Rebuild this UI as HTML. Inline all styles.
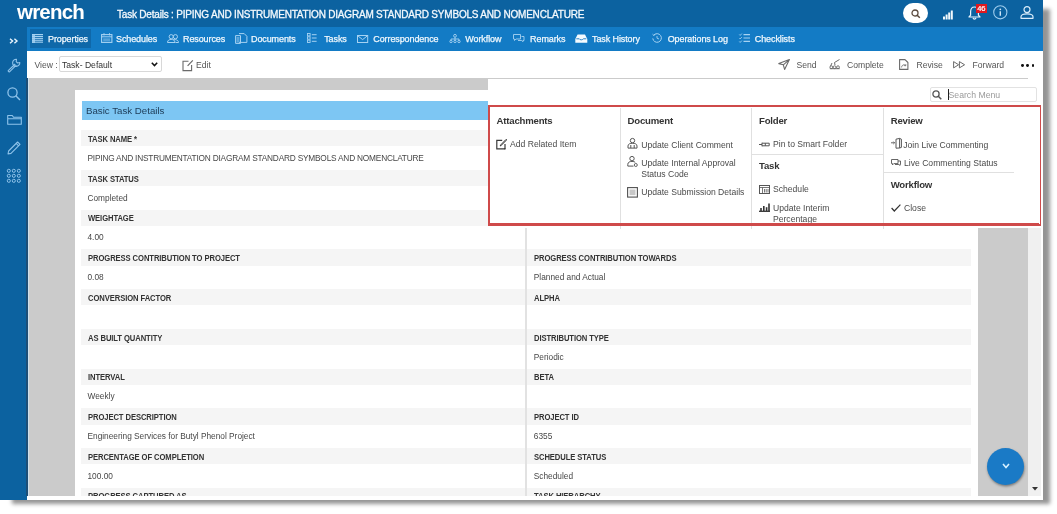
<!DOCTYPE html>
<html><head><meta charset="utf-8">
<style>
*{box-sizing:border-box;margin:0;padding:0}
html,body{width:1057px;height:514px;overflow:hidden;background:#fff;font-family:"Liberation Sans",sans-serif;}
.abs{position:absolute}
.t{position:absolute;white-space:nowrap;line-height:1;}
#frame{position:absolute;left:0;top:0;width:1043px;height:500px;background:#fff;will-change:transform;box-shadow:9px 6px 4px -2.5px rgba(0,0,0,0.42);}
#main{position:absolute;left:0;top:0;width:1043px;height:500px;overflow:hidden}
#clip{position:absolute;left:0;top:0;width:1041px;height:496px;overflow:hidden}
svg{position:absolute;overflow:visible}
.nv{position:absolute;top:35px;white-space:nowrap;line-height:1;font-size:9px;color:#eef7fd;-webkit-text-stroke:0.25px #eef7fd;letter-spacing:-0.1px}
.tb{position:absolute;top:60.5px;white-space:nowrap;line-height:1;font-size:8.6px;color:#333}
.lab{position:absolute;white-space:nowrap;line-height:1;font-size:8.9px;font-weight:bold;color:#333;letter-spacing:-0.1px;transform:scaleX(0.86);transform-origin:0 0}
.val{position:absolute;white-space:nowrap;line-height:1;font-size:8.3px;color:#474747}
.mh{position:absolute;white-space:nowrap;line-height:1;font-size:9.6px;font-weight:bold;color:#333;letter-spacing:-0.2px}
.mi{position:absolute;white-space:nowrap;line-height:1;font-size:8.6px;color:#4a4a4a}
</style></head><body>
<div id="frame">
<div id="main">

<div class="abs" style="left:0;top:0;width:27px;height:500px;background:#0c62a0"></div>
<div class="abs" style="left:0;top:0;width:1043px;height:27px;background:#0c62a0"></div>
<div class="abs" style="left:27px;top:27px;width:1016px;height:24px;background:#137bc5"></div>
<div class="abs" style="left:30px;top:29px;width:61px;height:18.5px;background:#0f68a9"></div>
<div class="abs" style="left:27px;top:51px;width:1016px;height:27.5px;background:#fff"></div>
<div id="clip">
<div class="abs" style="left:28px;top:78.3px;width:1000px;height:418px;background:#cbcbcb"></div>
<div class="abs" style="left:26px;top:78.3px;width:1.5px;height:418px;background:#1d4f78"></div>
<div class="abs" style="left:27.5px;top:78.3px;width:1.5px;height:418px;background:#cfe0ec"></div>
<div class="abs" style="left:1028px;top:79px;width:13px;height:417px;background:#f0f0f0"></div>
<div class="abs" style="left:75px;top:90px;width:903px;height:406px;background:#fff"></div>
<div class="abs" style="left:82px;top:101px;width:889px;height:19px;background:#7dc6f3"></div>
<div class="t" style="left:86px;top:106px;font-size:9.7px;color:#1d3b57">Basic Task Details</div>
<div class="abs" style="left:80.5px;top:130.30px;width:444.5px;height:16.2px;background:#f5f5f5"></div>
<div class="abs" style="left:527px;top:130.30px;width:444px;height:16.2px;background:#f5f5f5"></div>
<div class="lab" style="left:87.5px;top:134.90px">TASK NAME *</div>
<div class="val" style="left:87.5px;top:154.00px;letter-spacing:-0.2px">PIPING AND INSTRUMENTATION DIAGRAM STANDARD SYMBOLS AND NOMENCLATURE</div>
<div class="abs" style="left:80.5px;top:170.02px;width:444.5px;height:16.2px;background:#f5f5f5"></div>
<div class="abs" style="left:527px;top:170.02px;width:444px;height:16.2px;background:#f5f5f5"></div>
<div class="lab" style="left:87.5px;top:174.62px">TASK STATUS</div>
<div class="val" style="left:87.5px;top:193.72px;">Completed</div>
<div class="abs" style="left:80.5px;top:209.74px;width:444.5px;height:16.2px;background:#f5f5f5"></div>
<div class="abs" style="left:527px;top:209.74px;width:444px;height:16.2px;background:#f5f5f5"></div>
<div class="lab" style="left:87.5px;top:214.34px">WEIGHTAGE</div>
<div class="val" style="left:87.5px;top:233.44px;">4.00</div>
<div class="abs" style="left:80.5px;top:249.46px;width:444.5px;height:16.2px;background:#f5f5f5"></div>
<div class="abs" style="left:527px;top:249.46px;width:444px;height:16.2px;background:#f5f5f5"></div>
<div class="lab" style="left:87.5px;top:254.06px">PROGRESS CONTRIBUTION TO PROJECT</div>
<div class="val" style="left:87.5px;top:273.16px;">0.08</div>
<div class="lab" style="left:533.8px;top:254.06px">PROGRESS CONTRIBUTION TOWARDS</div>
<div class="val" style="left:533.8px;top:273.16px;">Planned and Actual</div>
<div class="abs" style="left:80.5px;top:289.18px;width:444.5px;height:16.2px;background:#f5f5f5"></div>
<div class="abs" style="left:527px;top:289.18px;width:444px;height:16.2px;background:#f5f5f5"></div>
<div class="lab" style="left:87.5px;top:293.78px">CONVERSION FACTOR</div>
<div class="lab" style="left:533.8px;top:293.78px">ALPHA</div>
<div class="abs" style="left:80.5px;top:328.90px;width:444.5px;height:16.2px;background:#f5f5f5"></div>
<div class="abs" style="left:527px;top:328.90px;width:444px;height:16.2px;background:#f5f5f5"></div>
<div class="lab" style="left:87.5px;top:333.50px">AS BUILT QUANTITY</div>
<div class="lab" style="left:533.8px;top:333.50px">DISTRIBUTION TYPE</div>
<div class="val" style="left:533.8px;top:352.60px;">Periodic</div>
<div class="abs" style="left:80.5px;top:368.62px;width:444.5px;height:16.2px;background:#f5f5f5"></div>
<div class="abs" style="left:527px;top:368.62px;width:444px;height:16.2px;background:#f5f5f5"></div>
<div class="lab" style="left:87.5px;top:373.22px">INTERVAL</div>
<div class="val" style="left:87.5px;top:392.32px;">Weekly</div>
<div class="lab" style="left:533.8px;top:373.22px">BETA</div>
<div class="abs" style="left:80.5px;top:408.34px;width:444.5px;height:16.2px;background:#f5f5f5"></div>
<div class="abs" style="left:527px;top:408.34px;width:444px;height:16.2px;background:#f5f5f5"></div>
<div class="lab" style="left:87.5px;top:412.94px">PROJECT DESCRIPTION</div>
<div class="val" style="left:87.5px;top:432.04px;">Engineering Services for Butyl Phenol Project</div>
<div class="lab" style="left:533.8px;top:412.94px">PROJECT ID</div>
<div class="val" style="left:533.8px;top:432.04px;">6355</div>
<div class="abs" style="left:80.5px;top:448.06px;width:444.5px;height:16.2px;background:#f5f5f5"></div>
<div class="abs" style="left:527px;top:448.06px;width:444px;height:16.2px;background:#f5f5f5"></div>
<div class="lab" style="left:87.5px;top:452.66px">PERCENTAGE OF COMPLETION</div>
<div class="val" style="left:87.5px;top:471.76px;">100.00</div>
<div class="lab" style="left:533.8px;top:452.66px">SCHEDULE STATUS</div>
<div class="val" style="left:533.8px;top:471.76px;">Scheduled</div>
<div class="abs" style="left:80.5px;top:487.78px;width:444.5px;height:16.2px;background:#f5f5f5"></div>
<div class="abs" style="left:527px;top:487.78px;width:444px;height:16.2px;background:#f5f5f5"></div>
<div class="lab" style="left:87.5px;top:492.38px">PROGRESS CAPTURED AS</div>
<div class="lab" style="left:533.8px;top:492.38px">TASK HIERARCHY</div>
<div class="abs" style="left:525.3px;top:125px;width:1.5px;height:371px;background:#e2e2e2"></div>
<div class="abs" style="left:987px;top:448px;width:37px;height:37px;border-radius:50%;background:#1a7ac6;box-shadow:0.5px 1.5px 2.5px rgba(0,0,0,0.4)"></div>
<svg style="left:1002px;top:463px" width="8" height="6"><path d="M1 1 L4 4.5 L7 1" stroke="#d6f0ff" stroke-width="1.6" fill="none"/></svg>
<svg style="left:1032px;top:487px" width="6" height="4"><path d="M0 0 L6 0 L3 3.5Z" fill="#333"/></svg>
<div class="abs" style="left:488px;top:79px;width:555px;height:149px;background:#fff"></div>
<div class="abs" style="left:929.5px;top:86.5px;width:107px;height:15.5px;border:1px solid #e2e2e2;border-radius:2px;background:#fff"></div>
<svg style="left:932px;top:89.5px" width="10" height="10"><circle cx="4" cy="4" r="3.1" stroke="#555" stroke-width="1.3" fill="none"/><path d="M6.3 6.3 L9.3 9.3" stroke="#555" stroke-width="1.5"/></svg>
<div class="abs" style="left:947.6px;top:89px;width:1px;height:10.5px;background:#222"></div>
<div class="t" style="left:948.5px;top:90.5px;font-size:8.7px;color:#9a9a9a">Search Menu</div>
<div class="abs" style="left:487.5px;top:105px;width:554px;height:121px;border:2.5px solid #cf4a4a"></div>
<div class="abs" style="left:619.5px;top:108px;width:1px;height:121px;background:#e0e0e0"></div>
<div class="abs" style="left:751.4px;top:108px;width:1px;height:121px;background:#e0e0e0"></div>
<div class="abs" style="left:883px;top:108px;width:1px;height:121px;background:#e0e0e0"></div>
<div class="abs" style="left:751.4px;top:153.9px;width:131.6px;height:1px;background:#e0e0e0"></div>
<div class="abs" style="left:883px;top:171.5px;width:130.6px;height:1px;background:#e0e0e0"></div>
<div class="mh" style="left:496.6px;top:116px">Attachments</div>
<div class="mh" style="left:627.6px;top:116px">Document</div>
<div class="mh" style="left:759px;top:116px">Folder</div>
<div class="mh" style="left:890.7px;top:116px">Review</div>
<div class="mh" style="left:759px;top:160.5px">Task</div>
<div class="mh" style="left:890.7px;top:179.6px">Workflow</div>
<div class="mi" style="left:510px;top:140.3px">Add Related Item</div>
<div class="mi" style="left:641.2px;top:140.8px">Update Client Comment</div>
<div class="mi" style="left:641.2px;top:158.8px">Update Internal Approval</div>
<div class="mi" style="left:641.2px;top:169.6px">Status Code</div>
<div class="mi" style="left:641.2px;top:187.8px">Update Submission Details</div>
<div class="mi" style="left:773px;top:140.1px">Pin to Smart Folder</div>
<div class="mi" style="left:773px;top:185.4px">Schedule</div>
<div class="mi" style="left:773px;top:204.3px">Update Interim</div>
<div class="mi" style="left:773px;top:215.4px">Percentage</div>
<div class="mi" style="left:903.3px;top:140.8px">Join Live Commenting</div>
<div class="mi" style="left:904px;top:158.9px">Live Commenting Status</div>
<div class="mi" style="left:904px;top:204.3px">Close</div>
<div class="abs" style="left:490px;top:223px;width:549px;height:3px;background:#cf4a4a"></div>
</div>
<div class="t" style="left:17px;top:2.2px;font-size:20.5px;font-weight:bold;color:#fff;letter-spacing:-0.8px">wrench</div>
<div class="t" style="left:117px;top:9.6px;font-size:10px;color:#f4f9fd;-webkit-text-stroke:0.3px #f4f9fd;letter-spacing:-0.2px">Task Details : PIPING AND INSTRUMENTATION DIAGRAM STANDARD SYMBOLS AND NOMENCLATURE</div>
<div class="nv" style="left:48px">Properties</div>
<div class="nv" style="left:116px">Schedules</div>
<div class="nv" style="left:183px">Resources</div>
<div class="nv" style="left:251px">Documents</div>
<div class="nv" style="left:324.2px">Tasks</div>
<div class="nv" style="left:373.3px">Correspondence</div>
<div class="nv" style="left:465.3px">Workflow</div>
<div class="nv" style="left:530.1px">Remarks</div>
<div class="nv" style="left:592px">Task History</div>
<div class="nv" style="left:667.7px">Operations Log</div>
<div class="nv" style="left:754.8px">Checklists</div>
<div class="tb" style="left:34.5px;color:#555">View :</div>
<div class="abs" style="left:58.7px;top:56px;width:103px;height:16px;border:1px solid #d8d8d8;border-radius:2px;background:#fff"></div>
<div class="tb" style="left:62px">Task- Default</div>
<svg style="left:151px;top:62px" width="7" height="5"><path d="M0.8 0.8 L3.5 3.6 L6.2 0.8" stroke="#111" stroke-width="1.5" fill="none"/></svg>
<div class="tb" style="left:196px;color:#555">Edit</div>
<div class="tb" style="left:796.5px;color:#555">Send</div>
<div class="tb" style="left:847px;color:#555">Complete</div>
<div class="tb" style="left:916.5px;color:#555">Revise</div>
<div class="tb" style="left:972.6px;color:#555">Forward</div>
<div class="abs" style="left:1021.1px;top:63.8px;width:2.8px;height:2.8px;border-radius:50%;background:#111"></div>
<div class="abs" style="left:1026.3px;top:63.8px;width:2.8px;height:2.8px;border-radius:50%;background:#111"></div>
<div class="abs" style="left:1031.5px;top:63.8px;width:2.8px;height:2.8px;border-radius:50%;background:#111"></div>
<svg style="left:9px;top:38px" width="10" height="6" viewBox="0 0 10 6"><path d="M1 0.8 L3.6 3 L1 5.2 M5.4 0.8 L8 3 L5.4 5.2" stroke="#e8f4fd" stroke-width="1.4" fill="none"/></svg>
<svg style="left:6px;top:58px" width="15" height="15" viewBox="0 0 15 15"><path d="M10.5 1.2 A3.6 3.6 0 1 0 13.8 4.5 L11.6 5 L10.2 3.6 Z M9.2 6 L2.2 12.6 A1.1 1.1 0 0 0 3.5 13.9 L10.3 7.1" stroke="#8fc3ea" stroke-width="1.1" fill="none" stroke-linejoin="round"/></svg>
<svg style="left:7px;top:87px" width="14" height="14" viewBox="0 0 14 14"><circle cx="5.5" cy="5.5" r="4.6" stroke="#8fc3ea" stroke-width="1.3" fill="none"/><path d="M8.8 8.8 L13 13" stroke="#8fc3ea" stroke-width="1.4"/></svg>
<svg style="left:6.5px;top:114px" width="15" height="11" viewBox="0 0 15 11"><path d="M0.7 1.5 L0.7 10.3 L14.3 10.3 L14.3 3.3 L6.5 3.3 L5.3 1.5 Z M0.7 4.8 L14.3 4.8" stroke="#8fc3ea" stroke-width="1.1" fill="none" stroke-linejoin="round"/></svg>
<svg style="left:7px;top:141px" width="14" height="14" viewBox="0 0 14 14"><path d="M10.6 1 L13 3.4 L4 12.4 L1 13 L1.6 10 Z M9.2 2.4 L11.6 4.8" stroke="#8fc3ea" stroke-width="1.1" fill="none" stroke-linejoin="round"/></svg>
<svg style="left:6.5px;top:169px" width="14" height="14" viewBox="0 0 14 14"><circle cx="1.8" cy="1.8" r="1.55" fill="none" stroke="#8fc3ea" stroke-width="1"/><circle cx="1.8" cy="6.8" r="1.55" fill="none" stroke="#8fc3ea" stroke-width="1"/><circle cx="1.8" cy="11.8" r="1.55" fill="none" stroke="#8fc3ea" stroke-width="1"/><circle cx="6.8" cy="1.8" r="1.55" fill="none" stroke="#8fc3ea" stroke-width="1"/><circle cx="6.8" cy="6.8" r="1.55" fill="none" stroke="#8fc3ea" stroke-width="1"/><circle cx="6.8" cy="11.8" r="1.55" fill="none" stroke="#8fc3ea" stroke-width="1"/><circle cx="11.8" cy="1.8" r="1.55" fill="none" stroke="#8fc3ea" stroke-width="1"/><circle cx="11.8" cy="6.8" r="1.55" fill="none" stroke="#8fc3ea" stroke-width="1"/><circle cx="11.8" cy="11.8" r="1.55" fill="none" stroke="#8fc3ea" stroke-width="1"/></svg>
<div class="abs" style="left:903px;top:3px;width:25px;height:20px;border-radius:10px;background:#fff"></div>
<svg style="left:911px;top:8.5px" width="10" height="10" viewBox="0 0 10 10"><circle cx="4" cy="4" r="3" stroke="#5b4a3e" stroke-width="1.3" fill="none"/><path d="M6.2 6.2 L8.8 8.8" stroke="#5b4a3e" stroke-width="1.5"/></svg>
<svg style="left:943px;top:8.5px" width="12" height="11" viewBox="0 0 12 11"><rect x="0.0" y="7.5" width="2" height="3" fill="#f2f8fc"/><rect x="2.6" y="5.5" width="2" height="5" fill="#f2f8fc"/><rect x="5.2" y="3.5" width="2" height="7" fill="#f2f8fc"/><rect x="7.800000000000001" y="1.5" width="2" height="9" fill="#f2f8fc"/></svg>
<svg style="left:968px;top:5.5px" width="13" height="14" viewBox="0 0 13 14"><path d="M6.5 1 C3.6 1 2.6 3.6 2.6 6 L2.6 9.2 L1 11 L12 11 L10.4 9.2 L10.4 6 C10.4 3.6 9.4 1 6.5 1 Z M5 12 A1.6 1.6 0 0 0 8 12" stroke="#e8f4fd" stroke-width="1.2" fill="none" stroke-linejoin="round"/></svg>
<div class="abs" style="left:976px;top:4.4px;width:11px;height:9px;background:#e0191f"></div>
<div class="t" style="left:977.2px;top:5.2px;font-size:7.6px;color:#fff;-webkit-text-stroke:0.2px #fff;letter-spacing:-0.2px">46</div>
<svg style="left:992.7px;top:4.7px" width="15" height="15" viewBox="0 0 15 15"><circle cx="7.3" cy="7.3" r="6.6" stroke="#9fcdee" stroke-width="1.1" fill="none"/><circle cx="7.3" cy="4.3" r="0.9" fill="#cfe6f7"/><path d="M7.3 6.3 L7.3 10.8" stroke="#cfe6f7" stroke-width="1.4"/></svg>
<svg style="left:1020px;top:6.3px" width="14" height="13" viewBox="0 0 14 13"><circle cx="7" cy="3.6" r="3" stroke="#d9ecfa" stroke-width="1.2" fill="none"/><path d="M1 12.3 L1 10.8 C1 8.6 3.4 7.8 7 7.8 C10.6 7.8 13 8.6 13 10.8 L13 12.3 Z" stroke="#d9ecfa" stroke-width="1.2" fill="none" stroke-linejoin="round"/></svg>
<svg style="left:32.4px;top:34px" width="11" height="9" viewBox="0 0 11 9"><rect x="0" y="0.0" width="11" height="1.1" fill="#a6d2f2"/><rect x="0" y="1.9" width="11" height="1.1" fill="#a6d2f2"/><rect x="0" y="3.8" width="11" height="1.1" fill="#a6d2f2"/><rect x="0" y="5.699999999999999" width="11" height="1.1" fill="#a6d2f2"/><rect x="0" y="7.6" width="11" height="1.1" fill="#a6d2f2"/><rect x="0" y="0" width="3" height="9" fill="#a6d2f2" opacity="0.8"/></svg>
<svg style="left:100.7px;top:33.2px" width="11.5" height="10" viewBox="0 0 11.5 10"><rect x="0.6" y="1.6" width="10.3" height="7.8" stroke="#a6d2f2" stroke-width="1.1" fill="none"/><path d="M0.6 3.8 L10.9 3.8 M3 0.2 L3 2.4 M8.5 0.2 L8.5 2.4" stroke="#a6d2f2" stroke-width="1"/><rect x="2.2" y="5.3" width="7" height="3" fill="#a6d2f2" opacity="0.45"/></svg>
<svg style="left:167px;top:34px" width="12" height="9" viewBox="0 0 12 9"><circle cx="4.2" cy="2.7" r="2.1" stroke="#a6d2f2" stroke-width="1" fill="none"/><circle cx="8.4" cy="2.7" r="2.1" stroke="#a6d2f2" stroke-width="1" fill="none"/><path d="M0.5 8.5 C0.5 6 2.5 5.5 4.2 5.5 C6 5.5 8 6 8 8.5 Z M6 5.7 C7 5.4 11.5 5.3 11.5 8.5 L8.5 8.5" stroke="#a6d2f2" stroke-width="1" fill="none"/></svg>
<svg style="left:234.6px;top:32.5px" width="12.5" height="11" viewBox="0 0 12.5 11"><path d="M0.6 2.6 L5.5 2.6 L5.5 10.4 L0.6 10.4 Z M4 0.6 L9.2 0.6 L11.9 3.3 L11.9 9.4 L4 9.4" stroke="#a6d2f2" stroke-width="1" fill="none"/><rect x="1.5" y="4" width="3" height="5.5" fill="#a6d2f2" opacity="0.5"/></svg>
<svg style="left:307.3px;top:33px" width="10" height="10" viewBox="0 0 10 10"><rect x="0.5" y="0.5" width="2.6" height="2.4" stroke="#a6d2f2" stroke-width="0.9" fill="none"/><rect x="0.5" y="3.8" width="2.6" height="2.4" stroke="#a6d2f2" stroke-width="0.9" fill="none"/><rect x="0.5" y="7.1" width="2.6" height="2.4" stroke="#a6d2f2" stroke-width="0.9" fill="none"/><path d="M4.8 1.7 L9.6 1.7 M4.8 5 L9.6 5 M4.8 8.3 L9.6 8.3" stroke="#a6d2f2" stroke-width="1"/></svg>
<svg style="left:357.2px;top:34.5px" width="11.2" height="8" viewBox="0 0 11.2 8"><rect x="0.5" y="0.5" width="10.2" height="7" stroke="#a6d2f2" stroke-width="1" fill="none"/><path d="M0.8 0.8 L5.6 4.6 L10.4 0.8" stroke="#a6d2f2" stroke-width="1" fill="none"/></svg>
<svg style="left:448.7px;top:34px" width="12" height="9" viewBox="0 0 12 9"><circle cx="6" cy="1.8" r="1.4" stroke="#a6d2f2" stroke-width="0.9" fill="none"/><path d="M6 3.2 L6 5 M2 5 L10 5 M2 5 L2 6.4 M10 5 L10 6.4 M6 5 L6 6.4" stroke="#a6d2f2" stroke-width="0.9"/><circle cx="2" cy="7.5" r="1.2" stroke="#a6d2f2" stroke-width="0.9" fill="none"/><circle cx="6" cy="7.5" r="1.2" stroke="#a6d2f2" stroke-width="0.9" fill="none"/><circle cx="10" cy="7.5" r="1.2" stroke="#a6d2f2" stroke-width="0.9" fill="none"/></svg>
<svg style="left:513.4px;top:34px" width="11.5" height="8" viewBox="0 0 11.5 8"><path d="M0.5 0.5 L7.5 0.5 L7.5 5 L3 5 L1.5 6.5 L1.5 5 L0.5 5 Z M8.5 2.5 L11 2.5 L11 6.5 L10 6.5 L10 7.7 L8.8 6.5 L5 6.5" stroke="#a6d2f2" stroke-width="0.9" fill="none" stroke-linejoin="round"/></svg>
<svg style="left:575.3px;top:34px" width="12.6" height="9" viewBox="0 0 12.6 9"><path d="M2.6 0.5 L10 0.5 L12.3 5 L12.3 8.7 L0.3 8.7 L0.3 5 Z" fill="#f4fafe"/><path d="M1.3 4.8 L4.3 4.8 C4.8 6.2 7.8 6.2 8.3 4.8 L11.3 4.8" stroke="#1577c2" stroke-width="0.9" fill="none"/></svg>
<svg style="left:651.5px;top:33px" width="10" height="10" viewBox="0 0 10 10"><path d="M1.8 2.2 A4.3 4.3 0 1 1 0.8 5.4" stroke="#a6d2f2" stroke-width="1" fill="none"/><path d="M0.5 1.2 L2 2.6 L3.2 1" stroke="#a6d2f2" stroke-width="0.9" fill="none"/><path d="M5 3 L5 5.2 L7 6" stroke="#a6d2f2" stroke-width="0.9" fill="none"/></svg>
<svg style="left:738.9px;top:33px" width="11.2" height="10" viewBox="0 0 11.2 10"><path d="M0.3 1.5 L1.2 2.4 L2.8 0.6 M0.3 5 L1.2 5.9 L2.8 4.1 M0.3 8.5 L1.2 9.4 L2.8 7.6" stroke="#a6d2f2" stroke-width="0.9" fill="none"/><path d="M4.5 1.6 L11 1.6 M4.5 5 L11 5 M4.5 8.4 L11 8.4" stroke="#a6d2f2" stroke-width="1.1"/></svg>
<svg style="left:181.7px;top:60px" width="11.5" height="11.5" viewBox="0 0 11.5 11.5"><path d="M6.5 1.2 L1 1.2 L1 10.6 L9.6 10.6 L9.6 5" stroke="#6a6a6a" stroke-width="1.1" fill="none"/><path d="M10.8 0.4 L5.6 5.8" stroke="#6a6a6a" stroke-width="1.2"/></svg>
<svg style="left:778px;top:58.5px" width="12" height="11" viewBox="0 0 12 11"><path d="M11.4 0.6 L0.8 4.6 L5.3 5.8 L6.6 10.4 Z M11.4 0.6 L5.3 5.8" stroke="#6a6a6a" stroke-width="1.1" fill="none" stroke-linejoin="round"/></svg>
<svg style="left:829px;top:59px" width="11.5" height="10.5" viewBox="0 0 11.5 10.5"><path d="M10.5 0.5 L5.5 3.5 L6 6 M3 4 L1.5 7.2 M0.8 9.7 L10.7 9.7" stroke="#6a6a6a" stroke-width="1" fill="none"/><circle cx="2.3" cy="8.2" r="1.4" stroke="#6a6a6a" stroke-width="0.9" fill="none"/><circle cx="5.6" cy="8.2" r="1.4" stroke="#6a6a6a" stroke-width="0.9" fill="none"/><circle cx="9" cy="8.2" r="1.4" stroke="#6a6a6a" stroke-width="0.9" fill="none"/></svg>
<svg style="left:899px;top:58.5px" width="9.5" height="11" viewBox="0 0 9.5 11"><path d="M0.6 0.6 L6 0.6 L8.9 3.5 L8.9 10.4 L0.6 10.4 Z" stroke="#6a6a6a" stroke-width="1.1" fill="none" stroke-linejoin="round"/><path d="M2.6 8.4 C2.6 6 5.4 5 6.5 6.6 M5.2 6.6 L6.7 6.8 L6.8 5.2" stroke="#6a6a6a" stroke-width="0.9" fill="none"/></svg>
<svg style="left:953px;top:61px" width="12.5" height="7.5" viewBox="0 0 12.5 7.5"><path d="M0.6 0.6 L5.6 3.75 L0.6 6.9 Z M6.4 0.6 L11.6 3.75 L6.4 6.9 Z" stroke="#6a6a6a" stroke-width="1" fill="none" stroke-linejoin="round"/></svg>
<svg style="left:496px;top:139px" width="11.5" height="10.5" viewBox="0 0 11.5 10.5"><path d="M6.2 1.4 L0.8 1.4 L0.8 9.8 L9 9.8 L9 5" stroke="#3a3a3a" stroke-width="1.2" fill="none"/><path d="M10.8 0.8 L5.2 6.4 L4.2 7 L4.6 6 L10 0.4 Z M9 9 L9 9.8 L8.2 9.8" stroke="#3a3a3a" stroke-width="1" fill="none"/></svg>
<svg style="left:627px;top:138px" width="11" height="10.6" viewBox="0 0 11 10.6"><circle cx="5.5" cy="2.6" r="2.2" stroke="#555" stroke-width="1" fill="none"/><path d="M1 10.1 L1 8 C1 6 3 5.3 5.5 5.3 C8 5.3 10 6 10 8 L10 10.1 Z M3.8 7 L3.8 10.1 M7.2 7 L7.2 10.1" stroke="#555" stroke-width="1" fill="none"/></svg>
<svg style="left:627px;top:156px" width="11" height="10.6" viewBox="0 0 11 10.6"><circle cx="5" cy="2.6" r="2.2" stroke="#555" stroke-width="1" fill="none"/><path d="M0.8 10.1 L0.8 8.3 C0.8 6.3 2.8 5.4 5 5.4 C6.5 5.4 7.5 5.7 8.2 6.3 M0.8 10.1 L6.5 10.1" stroke="#555" stroke-width="1" fill="none"/><circle cx="8.8" cy="9" r="1.5" stroke="#555" stroke-width="0.9" fill="none"/></svg>
<svg style="left:627px;top:186.6px" width="11" height="10.7" viewBox="0 0 11 10.7"><rect x="0.6" y="0.6" width="9.8" height="9.5" stroke="#505050" stroke-width="1.1" fill="none"/><rect x="2.5" y="2.5" width="6" height="5.7" fill="#c8c8c8"/></svg>
<svg style="left:759px;top:141.5px" width="11" height="5" viewBox="0 0 11 5"><path d="M0 2.5 L3 2.5 M3 0.7 L3 4.3 M3 1.2 L10.2 1.2 L10.2 3.8 L3 3.8 M6.3 1.2 L6.3 3.8" stroke="#555" stroke-width="1" fill="none"/></svg>
<svg style="left:759px;top:185px" width="11" height="9" viewBox="0 0 11 9"><rect x="0.5" y="0.5" width="10" height="8" stroke="#555" stroke-width="1" fill="none"/><path d="M0.5 2.5 L10.5 2.5 M3.5 2.5 L3.5 8.5 M5.5 4 L5.5 7.5 M7.2 4 L7.2 7.5 M9 4 L9 7.5" stroke="#555" stroke-width="0.8" fill="none"/></svg>
<svg style="left:759px;top:203px" width="11" height="9" viewBox="0 0 11 9"><path d="M0 8.3 L11 8.3" stroke="#333" stroke-width="1.3"/><rect x="1.2" y="5" width="1.6" height="3" fill="#333"/><rect x="4" y="3" width="1.6" height="5" fill="#333"/><rect x="6.8" y="4.2" width="1.6" height="3.8" fill="#333"/><rect x="9.2" y="0.5" width="1.6" height="7.5" fill="#333"/></svg>
<svg style="left:890.7px;top:138px" width="11" height="10.6" viewBox="0 0 11 10.6"><path d="M0 4.8 L3.5 4.8 M2.4 3.6 L3.6 4.8 L2.4 6" stroke="#555" stroke-width="0.9" fill="none"/><path d="M5 1.2 L8.6 0.4 L8.6 10 L5 10.2 Z M8.6 0.4 L10.4 1.2 L10.4 9.4 L8.6 10" stroke="#555" stroke-width="1" fill="none" stroke-linejoin="round"/></svg>
<svg style="left:890.7px;top:158.5px" width="10" height="7" viewBox="0 0 10 7"><path d="M0.5 0.5 L7 0.5 L7 4.6 L2.8 4.6 L1.5 5.9 L1.5 4.6 L0.5 4.6 Z M7 2 L9.5 2 L9.5 5.5 L8.8 5.5 L8.8 6.5 L7.8 5.5 L4 5.5" stroke="#555" stroke-width="0.9" fill="none" stroke-linejoin="round"/></svg>
<svg style="left:890.7px;top:203.5px" width="10" height="8" viewBox="0 0 10 8"><path d="M0.6 4 L3.3 7 L9.4 0.6" stroke="#333" stroke-width="1.2" fill="none"/></svg>
</div></div></body></html>
